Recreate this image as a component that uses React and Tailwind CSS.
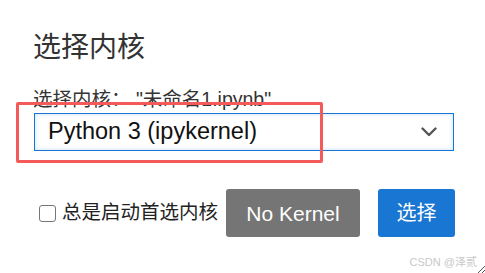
import React from 'react';

const FONT = "font-['Liberation_Sans','Noto_Sans_CJK_SC',sans-serif]";

export default function App() {
  return (
    <div className={`relative w-[485px] h-[273px] overflow-hidden bg-white text-[#333] ${FONT}`}>
      <div className="pl-[33px] pt-[30px] w-[455px]">
        <h2 className="text-[28px] leading-[36px] font-normal text-[#333]">选择内核</h2>

        <div className="mt-[22px] text-[19.5px] leading-[22px] text-[#333] whitespace-nowrap">
          选择内核： "未命名1.ipynb"
        </div>

        <div className="mt-[3px] ml-px h-[38px] w-[420px] flex items-center justify-between border border-[#1976d2] bg-white pl-[13px] pr-[16px] shadow-[inset_0_0_4px_rgba(25,118,210,0.25)]">
          <span className="text-[23.5px] leading-none text-[#111]">Python 3 (ipykernel)</span>
          <svg width="16" height="10" viewBox="0 0 16 10" fill="none">
            <polyline points="1.5,1.5 8,8 14.5,1.5" stroke="#555" strokeWidth="2.4" strokeLinecap="round" strokeLinejoin="round" />
          </svg>
        </div>

        <div className="mt-[38px] flex items-center">
          <label className="flex items-center pl-[6px]">
            <span className="w-[17px] h-[17px] rounded-[3px] border-[1.5px] border-[#767676] bg-white" />
            <span className="ml-[6px] text-[19.5px] leading-none text-[#222] whitespace-nowrap">总是启动首选内核</span>
          </label>
          <button className="ml-[8px] w-[134px] h-[48px] rounded-[3px] bg-[#757575] text-white text-[21px] leading-none">
            No Kernel
          </button>
          <button className="ml-[18px] w-[77px] h-[48px] rounded-[3px] bg-[#1976d2] text-white text-[20px] leading-none">
            选择
          </button>
        </div>
      </div>

      <div className="absolute left-[16px] top-[102px] w-[307px] h-[61px] border-[3px] border-[#f55a5a] rounded-[2px] z-10" />

      <div className="absolute right-[8px] bottom-[5px] text-[11px] leading-none text-[#c8c8c8]">CSDN @泽贰</div>
      <svg className="absolute right-0 bottom-0" width="8" height="8" viewBox="0 0 8 8">
        <line x1="1" y1="8" x2="8" y2="1" stroke="#555" strokeWidth="1" />
        <line x1="5" y1="8" x2="8" y2="5" stroke="#555" strokeWidth="1" />
      </svg>
    </div>
  );
}
